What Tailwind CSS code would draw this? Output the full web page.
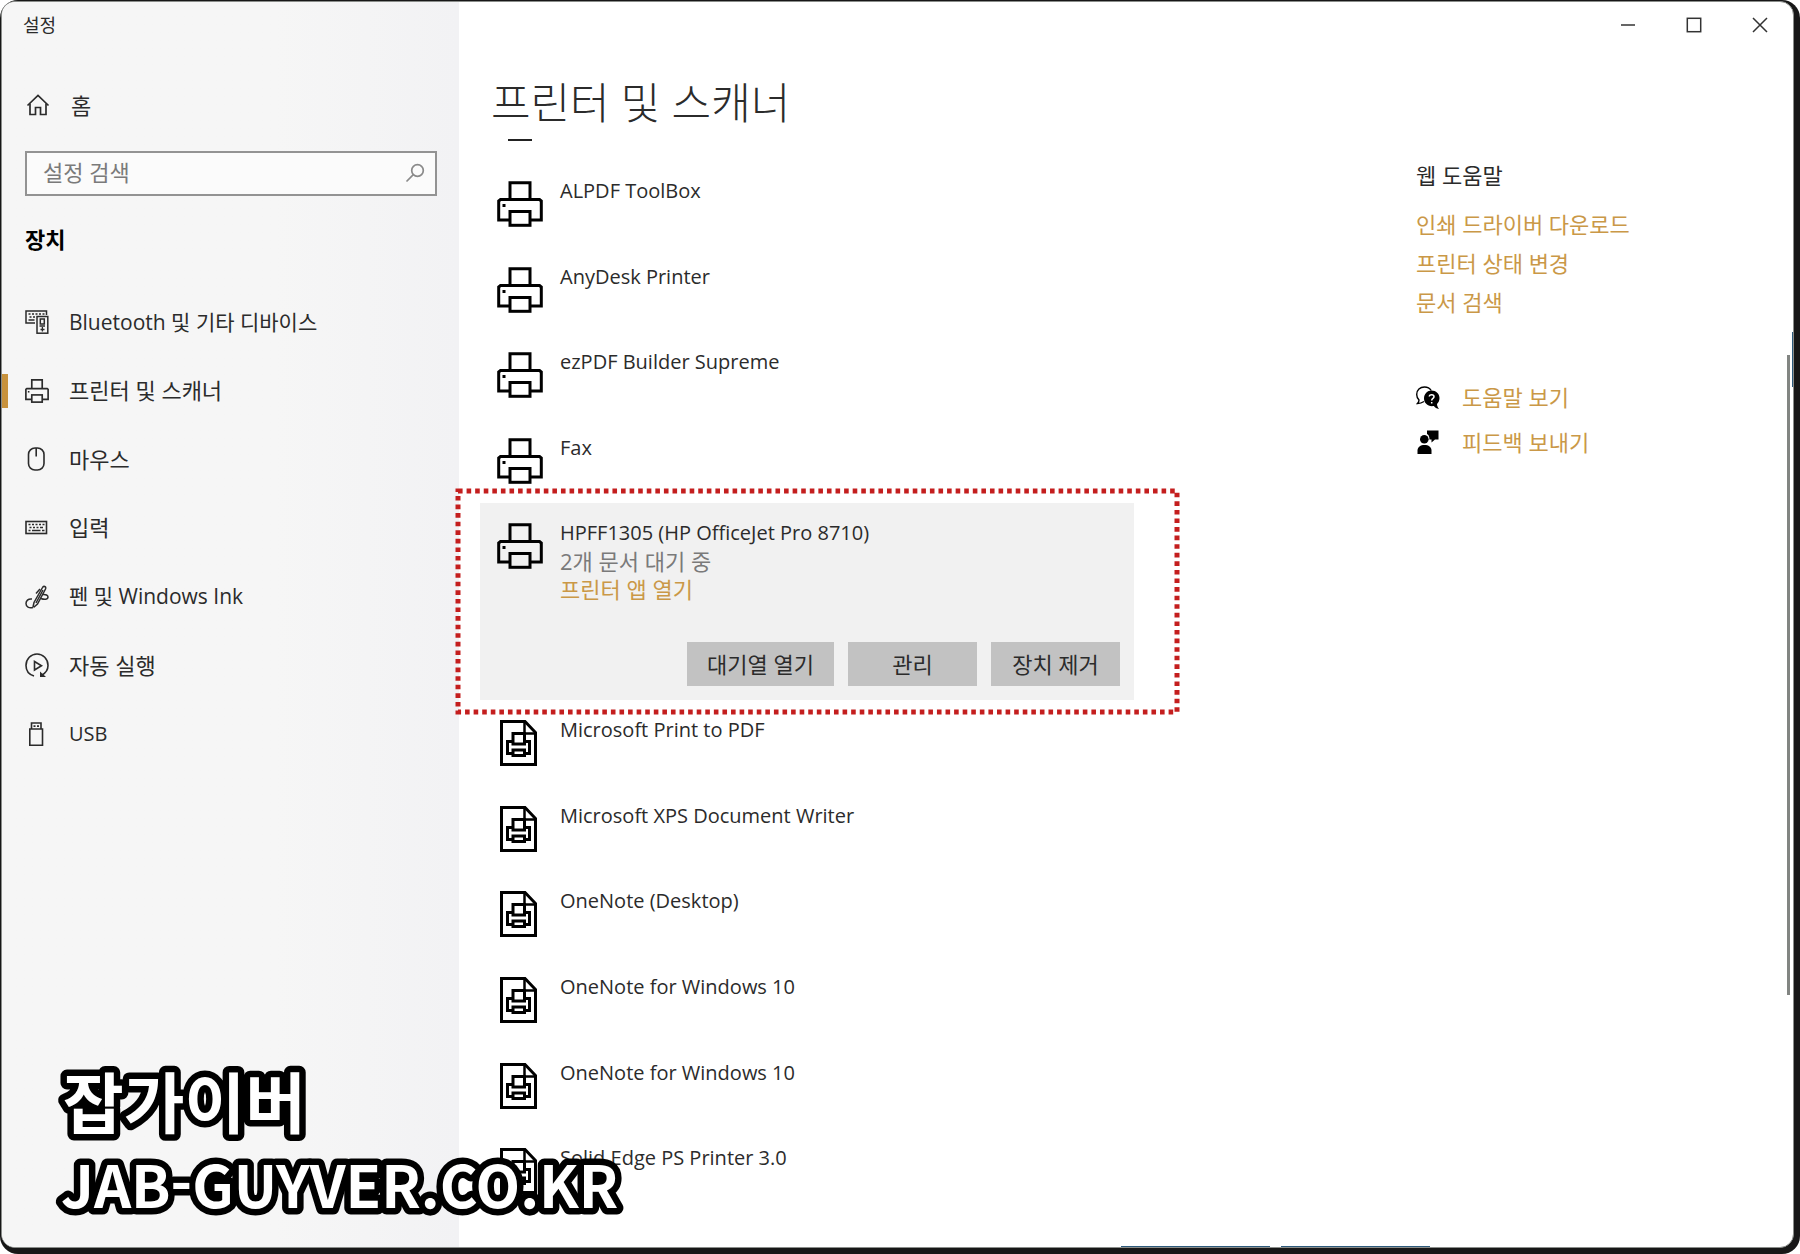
<!DOCTYPE html>
<html lang="ko">
<head>
    <meta charset="UTF-8">
    <meta name="viewport" content="width=device-width, initial-scale=1.0">
    <title>설정 - 프린터 및 스캐너</title>
    <script src="https://cdn.jsdelivr.net/npm/@tailwindcss/browser@4"></script>
    <style>
        body {
            font-family: 'Open Sans', 'Noto Sans CJK KR', sans-serif;
        }
    </style>
</head>
<body class="bg-white text-[#2b2b2b]">
    <!-- Icon sprite -->
    <svg class="hidden" aria-hidden="true">
        <symbol id="icon-printer" viewBox="0 0 46 46">
            <g fill="none" stroke="currentColor">
                <path d="M13 18V1.700H33V18"/>
                <path d="M12 39H1.700V20L3.500 18.500H42.500L44.300 20V39H34"/>
                <rect x="13" y="30.500" width="20" height="13.800"/>
            </g>
            <rect x="5.500" y="23" width="3" height="3" fill="currentColor"/>
        </symbol>
        <symbol id="icon-doc-printer" viewBox="0 0 37 46">
            <g fill="none" stroke="currentColor" stroke-width="3">
                <path d="M1.500 1.500H25L35.500 12.500V44.500H1.500Z"/>
                <path d="M24.500 2V13.500H36" stroke-width="2.500"/>
                <rect x="13" y="13.500" width="11.500" height="10.500"/>
                <path d="M12 21.500H7.500V33.500H12M25 21.500H29.500V33.500H25"/>
                <rect x="13" y="30" width="11.500" height="5.500"/>
            </g>
        </symbol>
    </svg>

    <div class="min-h-screen flex bg-[#171717] rounded-[18px] pt-[1px] pl-[1px] pr-[6px] pb-[6px]">
        <div class="relative flex flex-1 bg-white border border-[#8a8d8a] rounded-[14px] overflow-hidden">

            <!-- Sidebar -->
            <aside class="w-[457px] shrink-0 bg-linear-to-r from-[#f6f6f6] from-60% to-[#f2f2f4]">
                <div class="h-[46px] flex items-center pl-[21px] text-[18px]">설정</div>

                <a href="#" class="mt-[35px] h-11 flex items-center pl-6 text-[22px]">
                    <svg class="w-6 h-6 mr-[21px]" viewBox="0 0 24 24" fill="none" stroke="currentColor" stroke-width="1.700">
                        <path d="M1.500 12.500L12 2.500L22.500 12.500"/>
                        <path d="M4 10.500V21.500H9.500V14.500H14.500V21.500H20V10.500"/>
                    </svg>
                    홈
                </a>

                <div class="relative mt-6 ml-[23px] mr-[22px]">
                    <input type="text" aria-label="설정 검색" placeholder="설정 검색"
                           class="block w-full h-[45px] border-2 border-[#939393] bg-[#fbfbfb] pl-4 pr-12 pb-[3px] text-[22px] placeholder:text-[#7a7a7a] focus:outline-none">
                    <svg class="absolute right-3 top-3 w-5 h-5" viewBox="0 0 20 20" fill="none" stroke="#8a8a8a" stroke-width="1.700">
                        <circle cx="12.500" cy="7.500" r="5.800"/>
                        <path d="M8.300 11.700L1.500 18.500"/>
                    </svg>
                </div>

                <h2 class="mt-[27px] pl-[23px] text-[22px] leading-8 font-bold text-black">장치</h2>

                <nav class="mt-[33px] h-[480px] grid auto-rows-fr text-[22px]">
                    <a href="#" class="flex items-center pl-[23px] text-[21px]">
                        <svg class="w-6 h-6 mr-5" viewBox="0 0 24 24" fill="none" stroke="currentColor" stroke-width="1.500">
                            <path d="M10 13H1V1H21.500V5"/>
                            <path d="M3.500 4H5.500M7 4H9M10.500 4H12.500M14 4H16M17.500 4H19.500M4.500 7H6.500M8 7H10M3.500 10H9.500" stroke-width="1.600"/>
                            <rect x="12" y="6.500" width="10.800" height="16.700"/>
                            <rect x="15.300" y="9" width="4" height="5"/>
                            <path d="M14.500 16H20M17.400 17V21.500M15.500 19.500H19.500" stroke-width="1.300"/>
                        </svg>
                        Bluetooth 및 기타 디바이스
                    </a>
                    <a href="#" class="relative flex items-center pl-[23px]">
                        <span class="absolute left-0 h-[34px] w-[6px] bg-[#c8923c]"></span>
                        <svg class="w-6 h-6 mr-5" stroke-width="3.200"><use href="#icon-printer"/></svg>
                        프린터 및 스캐너
                    </a>
                    <a href="#" class="flex items-center pl-[23px]">
                        <svg class="w-6 h-6 mr-5" viewBox="0 0 24 24" fill="none" stroke="currentColor" stroke-width="1.600">
                            <rect x="3.500" y="1" width="15.500" height="22" rx="6.500"/>
                            <path d="M11.200 1V9.500"/>
                        </svg>
                        마우스
                    </a>
                    <a href="#" class="flex items-center pl-[23px]">
                        <svg class="w-6 h-6 mr-5" viewBox="0 0 24 24" fill="none" stroke="currentColor" stroke-width="1.600">
                            <rect x="1" y="5.500" width="20.500" height="12"/>
                            <path d="M3.500 8.500H5.500M7 8.500H9M10.500 8.500H12.500M14 8.500H16M17.500 8.500H19.500M4.500 11.500H6.500M8 11.500H10M11.500 11.500H13.500M15 11.500H18M3.500 14.500H5.500M7 14.500H15.500M17 14.500H19.500"/>
                        </svg>
                        입력
                    </a>
                    <a href="#" class="flex items-center pl-[23px] text-[21px]">
                        <svg class="w-6 h-6 mr-5" viewBox="0 0 24 24" fill="none" stroke="currentColor" stroke-width="1.500">
                            <path d="M8 22L9 17.500L17.500 2.500C18.500 0.500 21.500 1.500 20.500 4L12.500 19L8.500 22.500"/>
                            <path d="M11 18L18 5M15 4L11 8.500"/>
                            <path d="M7 14C3 13.500 1 16 1 18.500C1 22 4 23.500 8 22.500"/>
                            <path d="M17.500 9.500C21 9 23 10.500 23 12C23 14.500 19.500 15 16 13.500"/>
                        </svg>
                        펜 및 Windows Ink
                    </a>
                    <a href="#" class="flex items-center pl-[23px]">
                        <svg class="w-6 h-6 mr-5" viewBox="0 0 24 24" fill="none" stroke="currentColor" stroke-width="1.600">
                            <path d="M9 23C4 21.500 1 17.500 1 12.500C1 6 6 1 12 1C18 1 23 6 23 12.500C23 16.500 20.500 20 17 22"/>
                            <path d="M9.500 8.500V17L16.500 12.700Z"/>
                            <path d="M15 18.500V24H21Z" fill="currentColor" stroke="none"/>
                        </svg>
                        자동 실행
                    </a>
                    <a href="#" class="flex items-center pl-[23px] text-[20px]">
                        <svg class="w-6 h-6 mr-5" viewBox="0 0 24 24" fill="none" stroke="currentColor" stroke-width="1.600">
                            <path d="M6.500 7V1H16V7"/>
                            <path d="M4.800 7H17.500V23.200H4.800Z"/>
                            <path d="M8.500 4.200H10.500M12 4.200H14" stroke-width="1.800"/>
                        </svg>
                        USB
                    </a>
                </nav>
            </aside>

            <!-- Main -->
            <main class="flex-1">
                <div class="h-[46px] flex justify-end text-[#333]">
                    <button type="button" aria-label="최소화" class="w-[66px] grid place-items-center">
                        <svg class="w-4 h-4" viewBox="0 0 16 16" fill="none" stroke="currentColor" stroke-width="1.500"><path d="M1 8H15"/></svg>
                    </button>
                    <button type="button" aria-label="최대화" class="w-[66px] grid place-items-center">
                        <svg class="w-4 h-4" viewBox="0 0 16 16" fill="none" stroke="currentColor" stroke-width="1.500"><rect x="1.300" y="1.300" width="13.400" height="13.400"/></svg>
                    </button>
                    <button type="button" aria-label="닫기" class="w-[66px] grid place-items-center">
                        <svg class="w-4 h-4" viewBox="0 0 16 16" fill="none" stroke="currentColor" stroke-width="1.500"><path d="M1 1L15 15M15 1L1 15"/></svg>
                    </button>
                </div>

                <h1 class="mt-[25px] pl-8 text-[43px] leading-[60px] font-light">프린터 및 스캐너</h1>

                <div class="flex justify-between pl-[21px]">
                    <section class="w-[654px] text-[20px] leading-7">
                        <!-- Row scrolled out of view -->
                        <div class="h-7 pt-[6px] pl-7"><div class="w-6 h-[2px] bg-[#222]"></div></div>

                        <ul class="h-[342px] grid auto-rows-fr">
                            <li class="flex pl-[17px] pt-5">
                                <svg class="w-[46px] h-[46px] mr-[17px] text-black" stroke-width="3"><use href="#icon-printer"/></svg>
                                <span class="-mt-1">ALPDF ToolBox</span>
                            </li>
                            <li class="flex pl-[17px] pt-5">
                                <svg class="w-[46px] h-[46px] mr-[17px] text-black" stroke-width="3"><use href="#icon-printer"/></svg>
                                <span class="-mt-1">AnyDesk Printer</span>
                            </li>
                            <li class="flex pl-[17px] pt-5">
                                <svg class="w-[46px] h-[46px] mr-[17px] text-black" stroke-width="3"><use href="#icon-printer"/></svg>
                                <span class="-mt-1">ezPDF Builder Supreme</span>
                            </li>
                            <li class="flex pl-[17px] pt-5">
                                <svg class="w-[46px] h-[46px] mr-[17px] text-black" stroke-width="3"><use href="#icon-printer"/></svg>
                                <span class="-mt-1">Fax</span>
                            </li>
                        </ul>

                        <!-- Selected printer -->
                        <div class="relative h-[197px] flex flex-col justify-between bg-[#f1f1f1] pl-[17px] pr-[14px] pt-5 pb-[14px]">
                            <div class="flex">
                                <svg class="w-[46px] h-[46px] mr-[17px] text-black" stroke-width="3"><use href="#icon-printer"/></svg>
                                <div class="-mt-1 flex flex-col">
                                    <span>HPFF1305 (HP OfficeJet Pro 8710)</span>
                                    <span class="text-[22px] text-[#7a7a7a]">2개 문서 대기 중</span>
                                    <a href="#" class="text-[22px] text-[#ca9847]">프린터 앱 열기</a>
                                </div>
                            </div>
                            <div class="flex justify-end gap-[14px] text-[22px]">
                                <button type="button" class="w-[147px] h-11 bg-[#c2c2c2]">대기열 열기</button>
                                <button type="button" class="w-[129px] h-11 bg-[#c2c2c2]">관리</button>
                                <button type="button" class="w-[129px] h-11 bg-[#c2c2c2]">장치 제거</button>
                            </div>
                            <div class="absolute -left-[22px] -right-[43px] -top-3 -bottom-3 pointer-events-none">
                                <svg class="w-full h-full overflow-visible" fill="none" stroke="#c41e1e" stroke-width="5" stroke-dasharray="4.600 3.980">
                                    <rect width="100%" height="100%"/>
                                </svg>
                            </div>
                        </div>

                        <ul class="h-[514px] grid auto-rows-fr">
                            <li class="flex pl-5 pt-5">
                                <svg class="w-[37px] h-[46px] mr-[23px] text-black"><use href="#icon-doc-printer"/></svg>
                                <span class="-mt-1">Microsoft Print to PDF</span>
                            </li>
                            <li class="flex pl-5 pt-5">
                                <svg class="w-[37px] h-[46px] mr-[23px] text-black"><use href="#icon-doc-printer"/></svg>
                                <span class="-mt-1">Microsoft XPS Document Writer</span>
                            </li>
                            <li class="flex pl-5 pt-5">
                                <svg class="w-[37px] h-[46px] mr-[23px] text-black"><use href="#icon-doc-printer"/></svg>
                                <span class="-mt-1">OneNote (Desktop)</span>
                            </li>
                            <li class="flex pl-5 pt-5">
                                <svg class="w-[37px] h-[46px] mr-[23px] text-black"><use href="#icon-doc-printer"/></svg>
                                <span class="-mt-1">OneNote for Windows 10</span>
                            </li>
                            <li class="flex pl-5 pt-5">
                                <svg class="w-[37px] h-[46px] mr-[23px] text-black"><use href="#icon-doc-printer"/></svg>
                                <span class="-mt-1">OneNote for Windows 10</span>
                            </li>
                            <li class="flex pl-5 pt-5">
                                <svg class="w-[37px] h-[46px] mr-[23px] text-black"><use href="#icon-doc-printer"/></svg>
                                <span class="-mt-1">Solid Edge PS Printer 3.0</span>
                            </li>
                        </ul>
                    </section>

                    <section class="w-[377px] pt-[23px] text-[22px] leading-[39px] text-[#ca9847]">
                        <h2 class="mb-[10px] text-[#2b2b2b]">웹 도움말</h2>
                        <a href="#" class="block">인쇄 드라이버 다운로드</a>
                        <a href="#" class="block">프린터 상태 변경</a>
                        <a href="#" class="block">문서 검색</a>

                        <a href="#" class="mt-[53px] h-[45px] flex items-center">
                            <svg class="w-6 h-6 mr-[22px] text-black" viewBox="0 0 24 24">
                                <path d="M8 15.500C6.500 16.500 4 17.500 1.500 17.500C2.500 16.500 3 15.500 3 14C1.500 12.500 0.700 10.500 0.700 8.500C0.700 4 4 1 8.500 1C11.500 1 14 2.500 15.200 4.500" fill="none" stroke="currentColor" stroke-width="1.400"/>
                                <path d="M15.500 4.500C20 4.500 23.500 7.800 23.500 12C23.500 14.500 22.500 16.500 21 18C21 19.800 21.800 21.500 23 23C20.500 22.500 19 21.500 17.800 20C12 21 8 17 8 12.500C8 8 11.500 4.500 15.500 4.500Z" fill="currentColor"/>
                                <path d="M13.300 10.500C13.300 8 18 8 18 10.700C18 12.500 15.700 12.300 15.700 14.500M15.700 16V17.500" fill="none" stroke="#fff" stroke-width="1.500"/>
                            </svg>
                            도움말 보기
                        </a>
                        <a href="#" class="h-11 flex items-center">
                            <svg class="w-6 h-6 mr-[22px] text-black" viewBox="0 0 24 24" fill="currentColor">
                                <path d="M11 0.500H22.500V9.500H19L15.500 12.500V9.500H13.500C13.500 6.500 12.500 4.500 11 4Z"/>
                                <circle cx="8.300" cy="9.300" r="4.300"/>
                                <path d="M1.500 24V20.500C1.500 17 4.500 15 8.500 15C12.500 15 15.500 17 15.500 20.500V24Z"/>
                            </svg>
                            피드백 보내기
                        </a>
                    </section>
                </div>
            </main>

            <!-- Scrollbar thumb -->
            <div class="absolute right-[3px] top-[353px] w-[3px] h-[640px] bg-[#828582]"></div>

            <!-- Desktop showing through at the window edges -->
            <div class="absolute right-0 top-[330px] w-px h-[55px] bg-[#2d5a7c]"></div>
            <div class="absolute bottom-0 right-[363px] flex gap-[11px]">
                <div class="w-[149px] h-px bg-[#2d5a7c]"></div>
                <div class="w-[149px] h-px bg-[#2d5a7c]"></div>
            </div>

            <!-- Site watermark -->
            <svg class="absolute left-[50px] bottom-[20px] w-[600px] h-[170px] overflow-visible font-bold" viewBox="0 0 600 170" font-family="'Noto Sans CJK KR', sans-serif" fill="#fff" stroke="#000" stroke-width="13" stroke-linejoin="round" paint-order="stroke">
                <text x="11" y="71" font-size="66">잡가이버</text>
                <text x="9" y="151" font-size="58">JAB-GUYVER.CO.KR</text>
            </svg>
        </div>
    </div>
</body>
</html>
